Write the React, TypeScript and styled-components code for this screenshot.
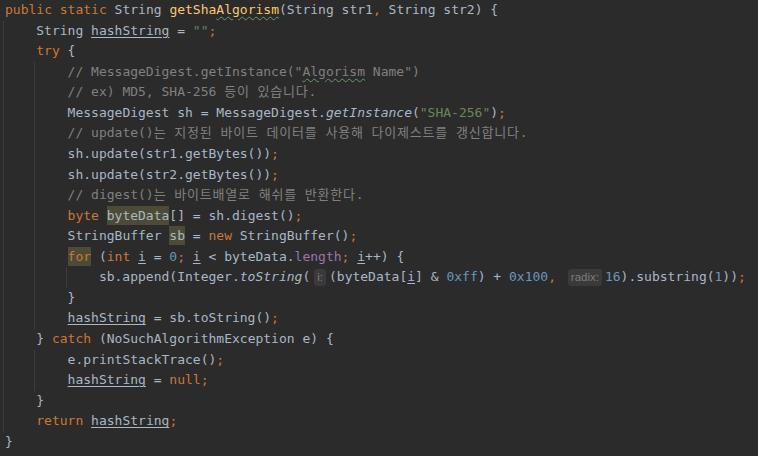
import React from "react";
import styled, { createGlobalStyle } from "styled-components";

const Global = createGlobalStyle`
  html, body { margin: 0; padding: 0; background: #2b2b2b; }
  body { width: 758px; height: 456px; overflow: hidden; }
`;

const LH = "20.57px";

const Editor = styled.div`
  width: 758px;
  height: 456px;
  box-sizing: border-box;
  padding: 0 0 0 5px;
  background: #2b2b2b;
  color: #a9b7c6;
  font-family: "DejaVu Sans Mono", "Noto Sans CJK KR", monospace;
  font-size: 13px;
  overflow: hidden;
`;

const Line = styled.div`
  height: ${LH};
  line-height: ${LH};
  white-space: pre;
`;

const Indent = styled.span`
  display: inline-block;
  width: 4ch;
  height: ${LH};
  vertical-align: top;
  position: relative;
  &::before {
    content: "";
    position: absolute;
    left: -2px;
    top: 0;
    bottom: 0;
    width: 1px;
    background: #3c3c3c;
  }
`;

type Kind = "kw" | "str" | "num" | "cmt" | "decl" | "field" | "plain";
const palette: Record<Kind, string> = {
  kw: "#cc7832",
  str: "#6a8759",
  num: "#6897bb",
  cmt: "#808080",
  decl: "#ffc66d",
  field: "#9876aa",
  plain: "#a9b7c6",
};

const Tok = styled.span<{ $k: Kind }>`
  color: ${(p) => palette[p.$k]};
`;

const Static = styled.span`
  font-style: italic;
`;

const Reassigned = styled.span`
  text-decoration: underline solid #a9b7c6 1px;
  text-underline-offset: 2px;
`;

const Typo = styled.span`
  text-decoration: underline wavy #659c6b 1px;
  text-underline-offset: 2px;
`;

const Usage = styled.span`
  background: #4d4b36;
  padding: 2px 0;
`;

const Ko = styled.span`
  letter-spacing: 0.8px;
`;

const Hint = styled.span`
  display: inline-block;
  font-family: "Liberation Sans", "Inter", sans-serif;
  font-size: 11.5px;
  color: #7d7d7d;
  background: #3a3a3a;
  border-radius: 3px;
  padding: 0 3px;
  height: 17px;
  line-height: 17px;
  margin: 2px 3px 0 4px;
  vertical-align: top;
`;

const K = ({ c }: { c: string }) => <Tok $k="kw">{c}</Tok>;
const N = ({ c }: { c: string }) => <Tok $k="num">{c}</Tok>;
const C = ({ children }: { children: React.ReactNode }) => <Tok $k="cmt">{children}</Tok>;
const Ind = ({ n }: { n: number }) => (
  <>
    {Array.from({ length: n }).map((_, i) => (
      <Indent key={i} />
    ))}
  </>
);

export default function App() {
  return (
    <>
      <Global />
      <Editor>
        <Line>
          <K c="public" /> <K c="static" /> String{" "}
          <Tok $k="decl">
            getSha<Typo>Algorism</Typo>
          </Tok>
          (String str1<K c="," /> String str2) {"{"}
        </Line>
        <Line>
          <Ind n={1} />
          String <Reassigned>hashString</Reassigned> = <Tok $k="str">""</Tok>
          <K c=";" />
        </Line>
        <Line>
          <Ind n={1} />
          <K c="try" /> {"{"}
        </Line>
        <Line>
          <Ind n={2} />
          <C>
            // MessageDigest.getInstance("<Typo>Algorism</Typo> Name")
          </C>
        </Line>
        <Line>
          <Ind n={2} />
          <C>
            // ex) MD5, SHA-256 <Ko>등이</Ko> <Ko>있습니다</Ko>.
          </C>
        </Line>
        <Line>
          <Ind n={2} />
          MessageDigest sh = MessageDigest.<Static>getInstance</Static>(
          <Tok $k="str">"SHA-256"</Tok>)<K c=";" />
        </Line>
        <Line>
          <Ind n={2} />
          <C>
            // update()<Ko>는</Ko> <Ko>지정된</Ko> <Ko>바이트</Ko> <Ko>데이터를</Ko> <Ko>사용해</Ko>{" "}
            <Ko>다이제스트를</Ko> <Ko>갱신합니다</Ko>.
          </C>
        </Line>
        <Line>
          <Ind n={2} />
          sh.update(str1.getBytes())<K c=";" />
        </Line>
        <Line>
          <Ind n={2} />
          sh.update(str2.getBytes())<K c=";" />
        </Line>
        <Line>
          <Ind n={2} />
          <C>
            // digest()<Ko>는</Ko> <Ko>바이트배열로</Ko> <Ko>해쉬를</Ko> <Ko>반환한다</Ko>.
          </C>
        </Line>
        <Line>
          <Ind n={2} />
          <K c="byte" /> <Usage>byteData</Usage>[] = sh.digest()<K c=";" />
        </Line>
        <Line>
          <Ind n={2} />
          StringBuffer <Usage>sb</Usage> = <K c="new" /> StringBuffer()<K c=";" />
        </Line>
        <Line>
          <Ind n={2} />
          <Usage>
            <K c="for" />
          </Usage>{" "}
          (<K c="int" /> <Reassigned>i</Reassigned> = <N c="0" />
          <K c=";" /> <Reassigned>i</Reassigned> {"<"} byteData.<Tok $k="field">length</Tok>
          <K c=";" /> <Reassigned>i</Reassigned>++) {"{"}
        </Line>
        <Line>
          <Ind n={3} />
          sb.append(Integer.<Static>toString</Static>(<Hint>i:</Hint>(byteData[<Reassigned>i</Reassigned>] &amp;{" "}
          <N c="0xff" />) + <N c="0x100" />
          <K c="," /> <Hint>radix:</Hint>
          <N c="16" />
          ).substring(<N c="1" />))<K c=";" />
        </Line>
        <Line>
          <Ind n={2} />
          {"}"}
        </Line>
        <Line>
          <Ind n={2} />
          <Reassigned>hashString</Reassigned> = sb.toString()<K c=";" />
        </Line>
        <Line>
          <Ind n={1} />
          {"} "}
          <K c="catch" /> (NoSuchAlgorithmException e) {"{"}
        </Line>
        <Line>
          <Ind n={2} />
          e.printStackTrace()<K c=";" />
        </Line>
        <Line>
          <Ind n={2} />
          <Reassigned>hashString</Reassigned> = <K c="null" />
          <K c=";" />
        </Line>
        <Line>
          <Ind n={1} />
          {"}"}
        </Line>
        <Line>
          <Ind n={1} />
          <K c="return" /> <Reassigned>hashString</Reassigned>
          <K c=";" />
        </Line>
        <Line>{"}"}</Line>
      </Editor>
    </>
  );
}
